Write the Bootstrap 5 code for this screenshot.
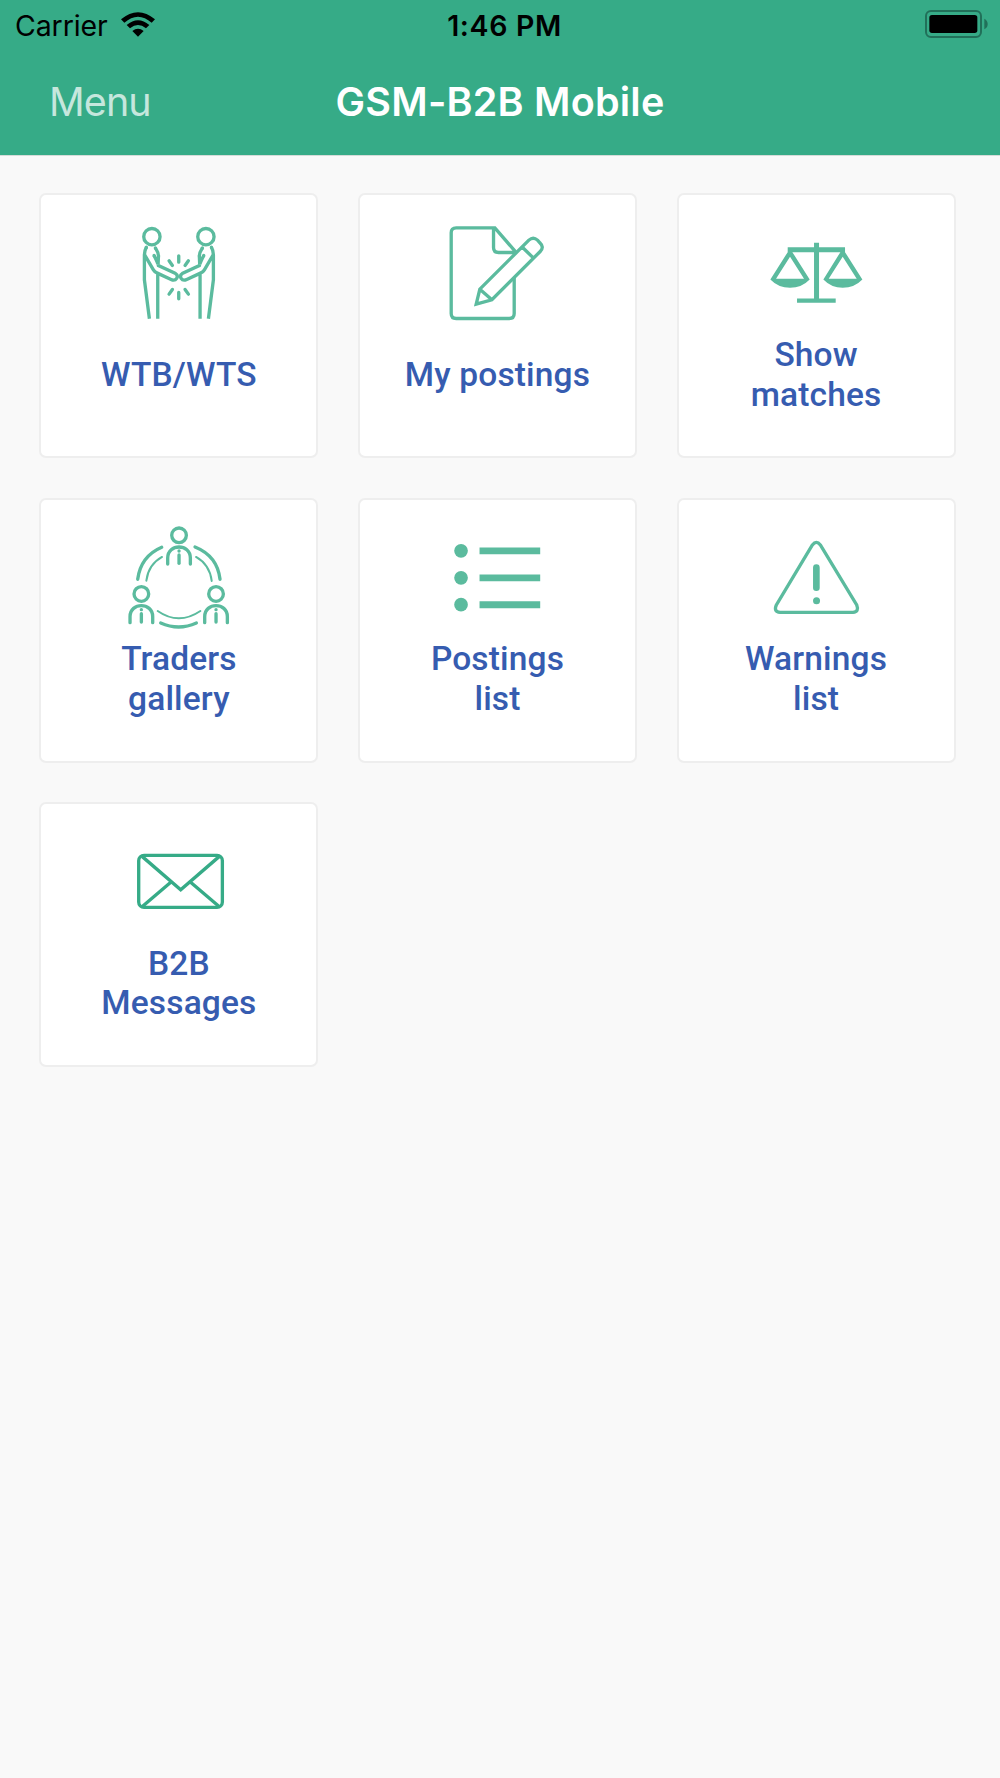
<!DOCTYPE html>
<html lang="en">
<head>
<meta charset="utf-8">
<meta name="viewport" content="width=device-width, initial-scale=1">
<title>GSM-B2B Mobile</title>
<link href="https://cdn.jsdelivr.net/npm/bootstrap@5.3.0/dist/css/bootstrap.min.css" rel="stylesheet">
<style>
  body { background: #f9f9f9; font-family: Inter, "Liberation Sans", sans-serif; }
  .app-header { background: #36ab87; height: 156px; border-bottom: 1px solid #d5dcd9; }
  .status-bar { height: 51px; padding: 0 12px 0 15px; color: #000; font-size: 28.5px; line-height: 51px; }
  .carrier-name { letter-spacing: -.1px; }
  .clock-text { font-weight: 600; letter-spacing: .65px; padding-left: 6px; }
  .wifi-icon { width: 34px; height: 25px; margin-left: 13px; margin-bottom: 2px; }
  .battery-icon { width: 63px; height: 28px; margin-bottom: 3px; }
  .title-bar { height: 104px; padding: 0 49px; line-height: 103px; }
  .menu-link { color: rgba(255,255,255,.72); font-size: 39.5px; font-weight: 400; letter-spacing: -.9px; }
  .app-title { color: #fff; font-size: 39.5px; font-weight: 600; letter-spacing: .22px; }
  .tile-grid { display: grid; grid-template-columns: repeat(3, 279px); gap: 39.3px 39.6px; padding: 37.4px 39.4px; }
  .tile { height: 265px; border: 2px solid #eee; border-radius: 7px; background: #fff; padding-top: 18px; color: #365cb0; text-decoration: none; }
  .tile-icon { width: 120px; height: 120px; fill: none; stroke: #5bbb9e; stroke-width: 10; flex: none; }
  .tile-icon .solid { fill: #5bbb9e; stroke: none; }
  .tile-label { height: 79.4px; margin-top: 1.7px; font: 500 33.5px/39.7px Roboto, sans-serif; letter-spacing: .15px; text-align: center; }
</style>
</head>
<body>
<header class="app-header">
  <div class="status-bar row g-0 align-items-center">
    <div class="col d-flex align-items-center">
      <span class="carrier-name">Carrier</span>
      <svg class="wifi-icon" viewBox="0 0 102 75">
        <path d="M0 22Q51-21 102 22L92 32Q51-4 10 32ZM17 39Q51 10 85 39L75 49Q51 29 27 49ZM34 57Q51 44 68 57L51 74Z"/>
      </svg>
    </div>
    <div class="col-auto clock-text">1:46 PM</div>
    <div class="col d-flex justify-content-end">
      <svg class="battery-icon" viewBox="0 0 189 84">
        <rect x="3" y="3" width="165" height="78" rx="15" fill="none" stroke="#217059" stroke-width="6"/>
        <rect x="13" y="15" width="144" height="54" rx="8"/>
        <path d="M178 26Q188 31 188 42Q188 53 178 58Z" fill="#217059"/>
      </svg>
    </div>
  </div>
  <nav class="title-bar row g-0">
    <div class="col"><a class="menu-link text-decoration-none" href="#">Menu</a></div>
    <div class="col-auto app-title">GSM-B2B Mobile</div>
    <div class="col"></div>
  </nav>
</header>
<main class="tile-grid">
  <a class="tile d-flex flex-column align-items-center" href="#">
    <svg class="tile-icon" viewBox="-3.2 -5.4 360 360">
      <g id="trader">
        <circle cx="95.500" cy="65.500" r="24.500"/>
        <path d="M79 97Q73 108 73 120V195L88 312M73 119L100 165Q104 172 112 175L153 194C168 201 179 184 165 175L115 152Q113 144 102 122M106 99Q117 116 115 128L114 150M113 178V312"/>
        <path stroke-linecap="round" d="M79 97V98M106 99V100M102 122V123"/>
      </g>
      <use href="#trader" transform="translate(353 0) scale(-1 1)"/>
      <path stroke-linecap="round" d="M176 123V142M147 138L157 152M205 138L195 152M176 233V252M157 224L147 238M195 224L205 238"/>
    </svg>
    <div class="tile-label d-flex align-items-center">WTB/WTS</div>
  </a>
  <a class="tile d-flex flex-column align-items-center" href="#">
    <svg class="tile-icon" viewBox="22.400 9.600 360 360">
      <path d="M259 127L196 54H80Q65 54 65 69V311Q65 326 80 326H239Q254 326 254 311V203M192 56V113Q192 128 207 128H257"/>
      <path stroke-linejoin="miter" d="M151 238L298 91Q311 79 324 91L331 99Q345 112 332 125L187 270L140 283ZM151 238L187 270M277 111L312 145" />
    </svg>
    <div class="tile-label d-flex align-items-center">My postings</div>
  </a>
  <a class="tile d-flex flex-column align-items-center" href="#">
    <svg class="tile-icon" viewBox="17.900 -20.400 360 360">
      <path class="solid" d="M192 69H207V82H285V97L337 179Q313 204 278 204Q244 204 220 179L271 97H207V236H257V249H141V236H192V97H127L179 179Q155 204 120 204Q85 204 61 179L113 97V82H192ZM120 111L78 177H162ZM278 111L236 177H320Z" fill-rule="evenodd"/>
    </svg>
    <div class="tile-label">Show<br>matches</div>
  </a>
  <a class="tile d-flex flex-column align-items-center" href="#">
    <svg class="tile-icon" viewBox="11.900 8.100 360 360" stroke-linecap="round">
      <g id="member">
        <circle cx="192" cy="60" r="22"/>
        <path d="M158 146V128C158 84 226 84 226 128V146"/>
        <circle class="solid" cx="192" cy="107" r="5"/>
        <path d="M192 119V144"/>
      </g>
      <use href="#member" x="-113" y="176"/>
      <use href="#member" x="111" y="176"/>
      <path d="M140 96Q77 123 68 192M240 95Q307 122 315 192M137 323Q191 347 244 323"/>
      <path stroke-width="6" d="M141 125Q100 148 94 196M243 125Q284 148 290 197M128 287Q191 331 256 287"/>
    </svg>
    <div class="tile-label">Traders<br>gallery</div>
  </a>
  <a class="tile d-flex flex-column align-items-center" href="#">
    <svg class="tile-icon" viewBox="-7.600 -21.500 360 360">
      <g class="solid">
        <circle cx="64.500" cy="77" r="20.500"/><circle cx="64.500" cy="158" r="20.500"/><circle cx="64.500" cy="238.500" r="20.500"/>
        <path d="M120 67H302V87H120ZM120 148H302V168H120ZM120 228H302V249H120Z"/>
      </g>
    </svg>
    <div class="tile-label">Postings<br>list</div>
  </a>
  <a class="tile d-flex flex-column align-items-center" href="#">
    <svg class="tile-icon" viewBox="-12.100 -21.900 360 360">
      <path d="M157 59Q169 43 181 59L290 239Q298 260 279 261H60Q40 260 49 239Z"/>
      <path stroke-width="20" stroke-linecap="round" d="M169 127V187"/>
      <circle class="solid" cx="169.500" cy="226.500" r="10.500"/>
    </svg>
    <div class="tile-label">Warnings<br>list</div>
  </a>
  <a class="tile d-flex flex-column align-items-center" href="#">
    <svg class="tile-icon" viewBox="266.900 96.900 360 360">
      <g stroke="#36ab87">
        <rect x="326" y="197" width="251" height="156" rx="16"/>
        <path d="M336 200L452 300L568 200M336 351L424 276M568 351L480 276"/>
      </g>
    </svg>
    <div class="tile-label">B2B<br>Messages</div>
  </a>
</main>
<script src="https://cdn.jsdelivr.net/npm/bootstrap@5.3.0/dist/js/bootstrap.bundle.min.js"></script>
</body>
</html>
